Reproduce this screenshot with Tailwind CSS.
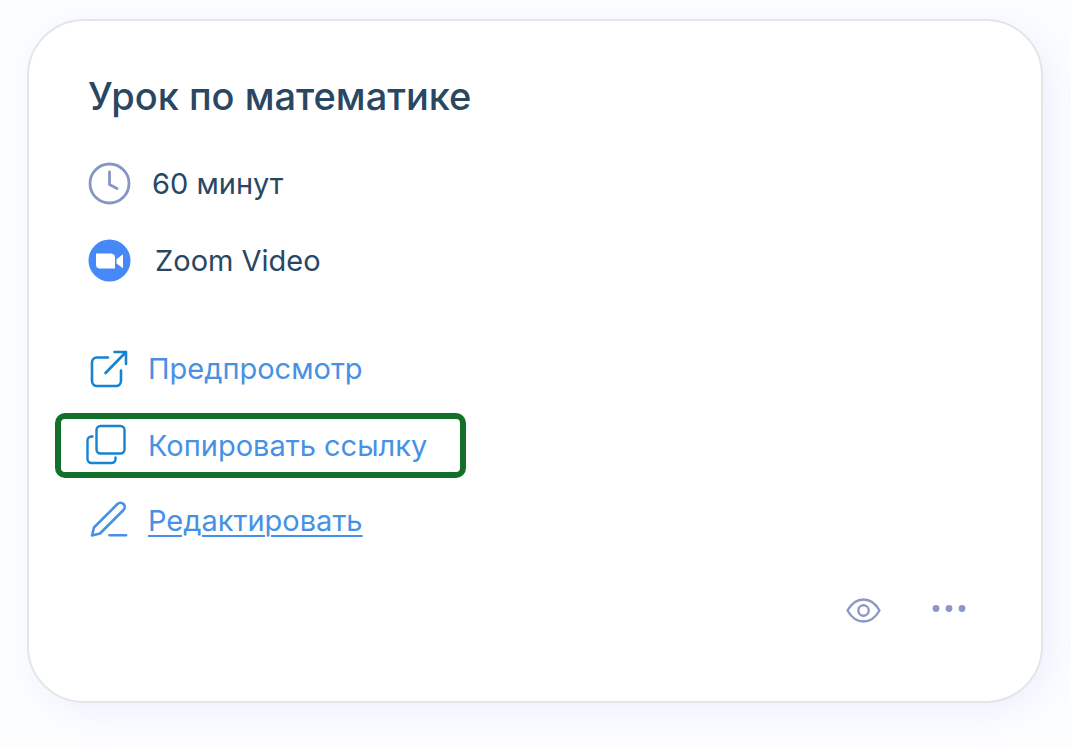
<!DOCTYPE html>
<html lang="ru">
<head>
    <meta charset="UTF-8">
    <meta name="viewport" content="width=device-width, initial-scale=1.0">
    <title>Урок по математике</title>
    <script src="https://cdn.jsdelivr.net/npm/@tailwindcss/browser@4"></script>
</head>
<body class="bg-[#fcfdff] font-['Inter',sans-serif] text-[#294763]">
    <main class="pl-7 pr-[29px] pt-5 pb-11">
        <article class="bg-white rounded-[56px] outline-2 outline-[#e3e6e8] -outline-offset-1 shadow-[8px_8px_36px_rgba(90,130,240,0.10)] px-15 pt-[52px] pb-[73px]">
            <h1 class="text-[38px] leading-[48px] font-medium">Урок по математике</h1>

            <!-- Lesson details -->
            <ul class="mt-[43px] flex flex-col gap-[35px] text-[29px] leading-[42px]">
                <li class="flex items-center gap-[22px]">
                    <svg class="size-[42px] shrink-0 overflow-visible" viewBox="0 0 42 42" fill="none" stroke="#8795c4" stroke-width="2.8" stroke-linecap="round" stroke-linejoin="round" aria-hidden="true">
                        <circle cx="21.500" cy="20.500" r="19.500"/>
                        <path d="M21.500 9v12.500l7.500 4"/>
                    </svg>
                    <span>60 минут</span>
                </li>
                <li class="flex items-center gap-[25px]">
                    <svg class="size-[42px] shrink-0 overflow-visible" viewBox="0 0 42 42" aria-hidden="true">
                        <circle cx="21.500" cy="20.500" r="21" fill="#4688f8"/>
                        <path d="M8 13.500h15a4 4 0 0 1 4 4v11H12a4 4 0 0 1-4-4zM28.500 19.200l6.500-5v14l-6.500-4.600z" fill="#fff"/>
                    </svg>
                    <span>Zoom Video</span>
                </li>
            </ul>

            <!-- Links -->
            <nav class="mt-[67px] flex flex-col items-start text-[29px] leading-10 text-[#4791e5]">
                <a href="#preview" class="flex items-center gap-5">
                    <svg class="size-10 shrink-0" viewBox="0 0 40 40" fill="none" stroke="#1682d2" stroke-width="2.6" stroke-linecap="round" stroke-linejoin="round" aria-hidden="true">
                        <path d="M20 8.500H9a5 5 0 0 0-5 5V32a5 5 0 0 0 5 5h19a5 5 0 0 0 5-5V21.500"/>
                        <path d="M17.500 24 38 3M26.500 3H38v12"/>
                    </svg>
                    <span>Предпросмотр</span>
                </a>
                <button type="button" class="-ml-[33px] mt-6 mb-[23px] flex cursor-pointer items-center gap-5 rounded-[10px] border-6 border-[#13702a] pt-[7px] pb-[6px] pr-[33px] pl-[27px]">
                    <svg class="size-10 shrink-0 overflow-visible" viewBox="0 0 40 40" fill="none" stroke="#1682d2" stroke-width="2.4" stroke-linecap="round" stroke-linejoin="round" aria-hidden="true">
                        <rect x="8.500" y="0" width="28" height="27.500" rx="4"/>
                        <path d="M4.500 10.500H3.500a4 4 0 0 0-4 4V33a4 4 0 0 0 4 4h20a4 4 0 0 0 4-4v-1.500"/>
                    </svg>
                    <span>Копировать ссылку</span>
                </button>
                <a href="#edit" class="flex items-center gap-5">
                    <svg class="size-10 shrink-0" viewBox="0 0 40 40" fill="none" stroke="#4791e5" stroke-width="2.6" stroke-linecap="round" stroke-linejoin="round" aria-hidden="true">
                        <path d="M4 34.500 6 26.500 29.500 3a4.200 4.200 0 0 1 6 6L12 32.500z"/>
                        <path d="M21.500 34.200H38"/>
                    </svg>
                    <span class="underline decoration-2 underline-offset-4">Редактировать</span>
                </a>
            </nav>

            <!-- Card actions -->
            <div class="mt-[52px] flex items-center justify-end gap-[50px] pr-[15px]">
                <button type="button" aria-label="Показать" class="cursor-pointer">
                    <svg class="size-9" viewBox="0 0 36 36" fill="none" stroke="#8e98c6" stroke-width="2.4" stroke-linejoin="round" aria-hidden="true">
                        <path d="M2.500 17.500C6.500 10.500 12 6.500 18.500 6.500s12 4 16 11c-4 7-9.500 11-16 11s-12-4-16-11z"/>
                        <circle cx="18.500" cy="17.500" r="5.200"/>
                    </svg>
                </button>
                <button type="button" aria-label="Ещё" class="cursor-pointer">
                    <svg class="size-9" viewBox="0 0 36 36" fill="#8c96c8" aria-hidden="true">
                        <circle cx="5" cy="15.500" r="3.400"/>
                        <circle cx="18" cy="15.500" r="3.400"/>
                        <circle cx="31" cy="15.500" r="3.400"/>
                    </svg>
                </button>
            </div>
        </article>
    </main>
</body>
</html>
